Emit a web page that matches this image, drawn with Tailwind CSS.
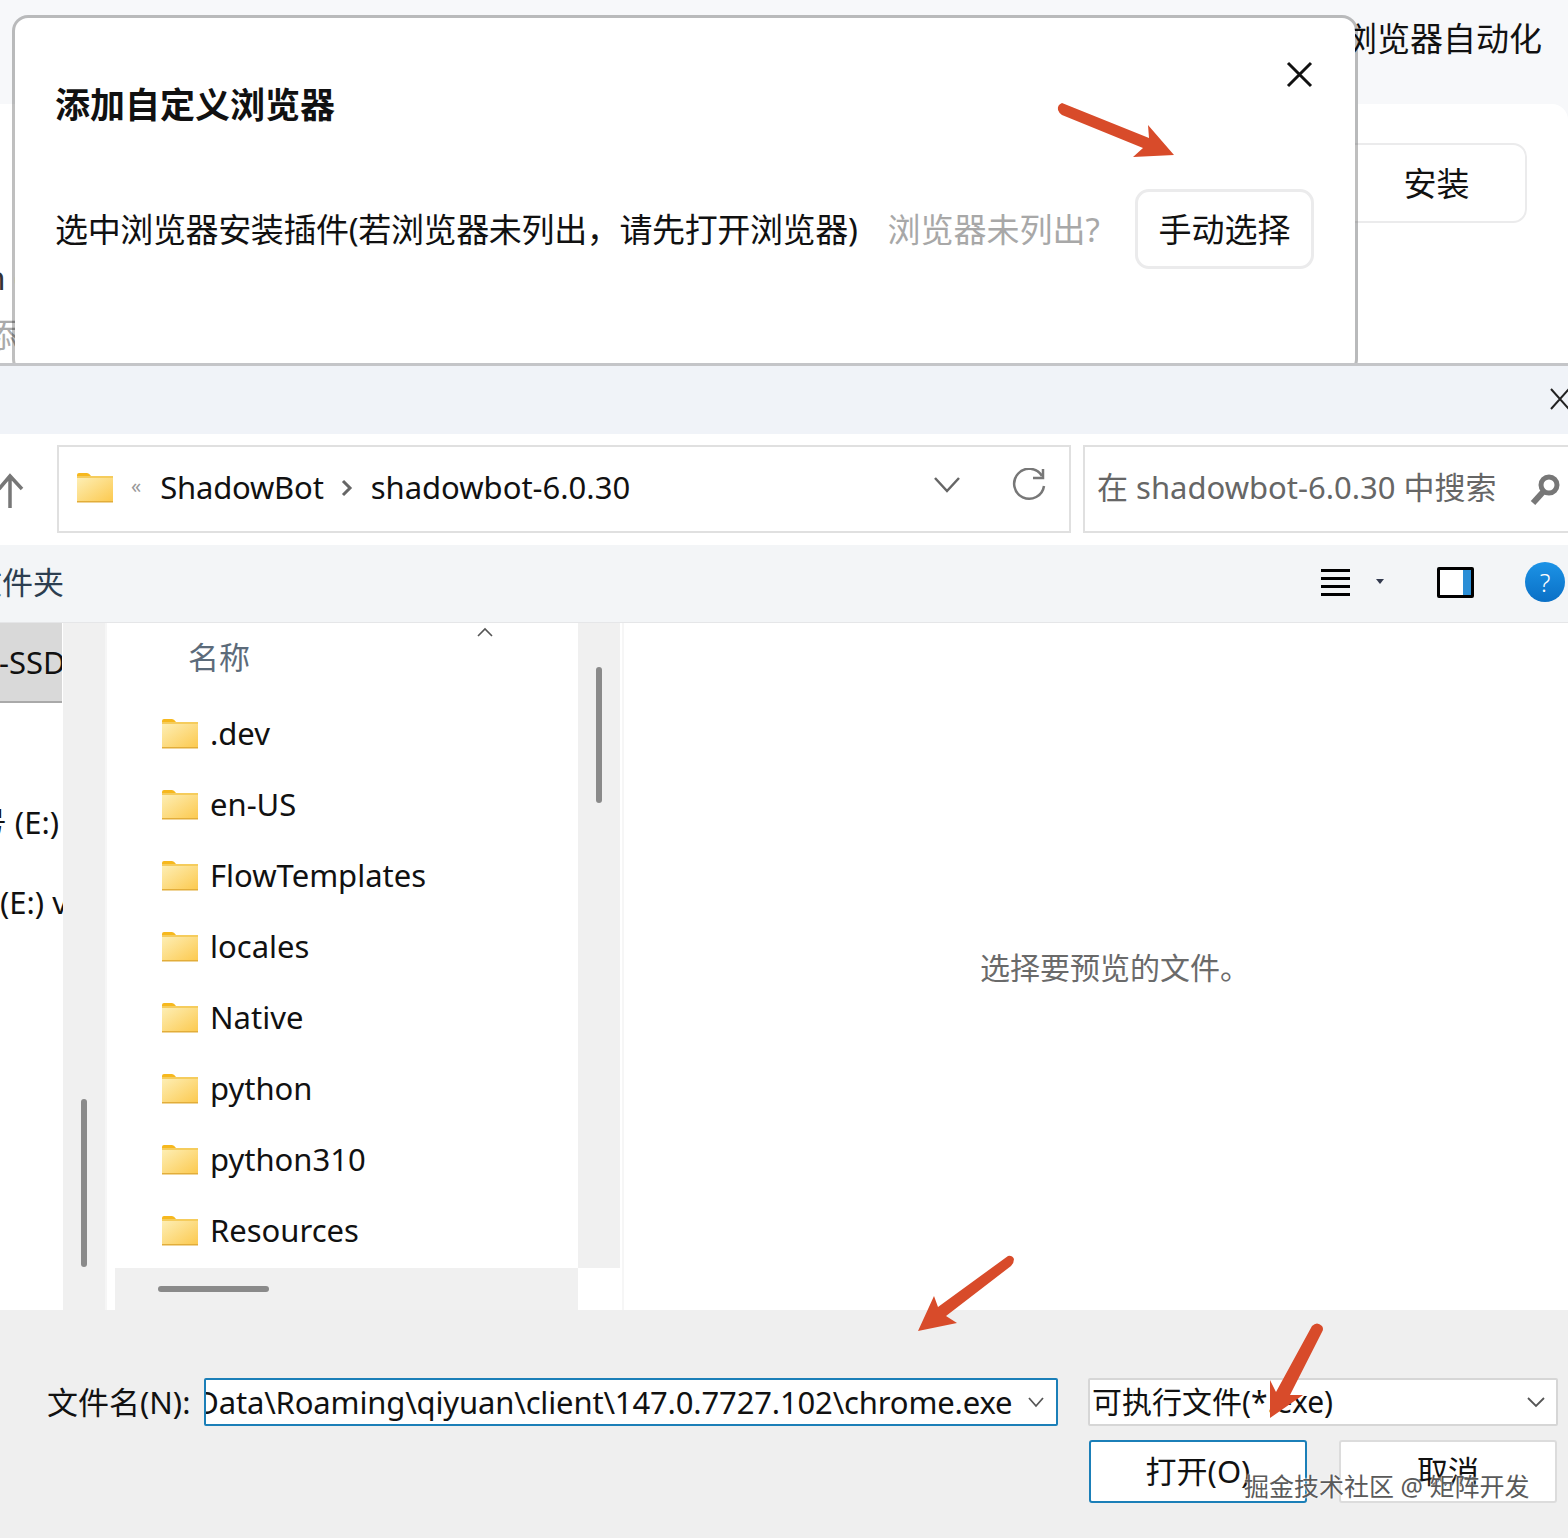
<!DOCTYPE html>
<html lang="zh">
<head>
<meta charset="utf-8">
<script src="https://cdn.jsdelivr.net/npm/@tailwindcss/browser@4"></script>
</head>
<body class="m-0">
<div class="relative w-[1568px] h-[1538px] overflow-hidden bg-white text-[33px] leading-none text-[#111] font-['Noto_Sans','Noto_Sans_CJK_SC',sans-serif]">

  <!-- page behind the modal -->
  <section class="relative h-[366px] bg-[#f7f8fa] border-b-[3px] border-[#c4c5c8] overflow-hidden">
    <div class="absolute left-[1358px] top-[104px] w-[210px] h-[270px] rounded-tr-[16px] bg-white"></div>
    <div class="absolute left-0 top-[104px] w-[20px] h-[270px] bg-white"></div>
    <span class="absolute right-[1544px] top-[261px] text-[#333] whitespace-nowrap">n (</span>
    <span class="absolute left-[-15px] top-[318px] text-[#aaa]">添</span>
    <span class="absolute left-[1344px] top-[22px] whitespace-nowrap">浏览器自动化</span>
    <button class="absolute left-[1330px] top-[143px] w-[197px] h-[80px] rounded-[14px] border-2 border-[#ebebec] bg-white pl-[16px]">安装</button>
    <!-- modal -->
    <div class="absolute left-[12px] top-[15px] w-[1346px] h-[360px] rounded-[16px] border-[3px] border-black/25 bg-white bg-clip-padding">
      <h2 class="absolute left-[40px] top-[69px] text-[35px] font-bold whitespace-nowrap">添加自定义浏览器</h2>
      <svg class="absolute left-[1270px] top-[41px]" width="30" height="30" viewBox="0 0 30 30" fill="none" stroke="#111" stroke-width="3"><path d="M3 4 L26 27 M26 4 L3 27"/></svg>
      <div class="absolute left-[40px] top-[171px] right-[41px] flex items-center h-[80px] whitespace-nowrap">
        <span class="tracking-[-0.36px]">选中浏览器安装插件(若浏览器未列出，请先打开浏览器)</span>
        <span class="ml-[30px] text-[#a8a8a8]">浏览器未列出?</span>
        <button class="ml-auto w-[179px] h-[80px] rounded-[14px] border-[3px] border-[#ebebec] bg-white">手动选择</button>
      </div>
    </div>
  </section>

  <!-- file dialog -->
  <section class="flex flex-col text-[31px] text-[#111]">
    <header class="h-[68px] bg-[#f0f3f8] relative">
      <svg class="absolute left-[1550px] top-[22px]" width="20" height="22" viewBox="0 0 20 22" fill="none" stroke="#222" stroke-width="2"><path d="M1 1 L19 21 M19 1 L1 21"/></svg>
    </header>
    <div class="h-[111px] bg-white flex items-start pt-[11px] relative">
      <svg class="absolute left-[-2px] top-[38px]" width="26" height="38" viewBox="0 0 26 38" fill="none" stroke="#777" stroke-width="3.5"><path d="M12 36 V3 M1 17 L12 4 L24 17"/></svg>
      <div class="ml-[57px] w-[1014px] h-[88px] border-2 border-[#e0e0e0] flex items-center pb-[3px] relative">
        <svg class="ml-[17px]" width="38" height="30" viewBox="0 0 38 30"><use href="#folder"/></svg>
        <span class="ml-[17px] text-[20px] text-[#999] -mt-[3px]">«</span>
        <span class="ml-[19px] tracking-[-0.2px]">ShadowBot</span>
        <svg class="ml-[17px]" width="12" height="20" viewBox="0 0 12 20" fill="none" stroke="#666" stroke-width="3"><path d="M2 3 L9 10 L2 17"/></svg>
        <span class="ml-[18px]">shadowbot-6.0.30</span>
        <svg class="absolute left-[874px] top-[28px]" width="28" height="20" viewBox="0 0 28 20" fill="none" stroke="#666" stroke-width="2.5"><path d="M2 3 L14 16 L26 3"/></svg>
        <svg class="absolute left-[953px] top-[21px]" width="36" height="36" viewBox="0 0 36 36" fill="none" stroke="#777" stroke-width="2.5"><path d="M30 8 A15 15 0 1 0 32 18"/><path d="M31 1 V10 H21"/></svg>
      </div>
      <div class="ml-[12px] flex-1 h-[88px] border-2 border-r-0 border-[#e0e0e0] flex items-center pl-[12px] pb-[3px] text-[#666] relative whitespace-nowrap">
        <span>在 shadowbot-6.0.30 中搜索</span>
        <svg class="absolute left-[444px] top-[25px]" width="32" height="36" viewBox="0 0 32 36" fill="none" stroke="#777"><circle cx="20" cy="13" r="8" stroke-width="5"/><path d="M14 20 L4 31" stroke-width="6"/></svg>
      </div>
    </div>
    <div class="h-[78px] bg-[#f3f5f7] border-b border-[#e5e6e8] flex items-center pb-[3px] relative">
      <span class="absolute left-[-29px] top-[22px] text-[#2c3e50] whitespace-nowrap">文件夹</span>
      <div class="ml-auto flex items-center">
        <div class="flex flex-col gap-[5px]">
          <i class="block w-[29px] h-[3px] bg-black"></i><i class="block w-[29px] h-[3px] bg-black"></i><i class="block w-[29px] h-[3px] bg-black"></i><i class="block w-[29px] h-[3px] bg-black"></i>
        </div>
        <svg class="ml-[25px]" width="10" height="6" viewBox="0 0 10 6"><path d="M1 0 H9 L5 5 Z" fill="#333a4e"/></svg>
        <div class="ml-[52px] w-[37px] h-[31px] border-[3px] border-black rounded-[2px] bg-white flex justify-end"><i class="block w-[8px] bg-[#2b8ed6]"></i></div>
        <div class="ml-[51px] mr-[3px] w-[40px] h-[40px] rounded-full bg-linear-to-b from-[#1c93e6] to-[#0a70c6] text-white text-[25px] font-light flex items-center justify-center">?</div>
      </div>
    </div>

    <div class="h-[687px] flex relative">
      <!-- nav pane -->
      <aside class="w-[63px] relative overflow-hidden whitespace-nowrap">
        <div class="w-[62px] h-[80px] bg-[#d9d9d9] border-b-2 border-[#a9a9a9] overflow-hidden flex items-center"><span class="ml-[-1px]">-SSD</span></div>
        <span class="absolute right-[4px] top-[184px]">号 (E:)</span>
        <span class="absolute left-0 top-[264px]">(E:) v</span>
      </aside>
      <div class="w-[42px] bg-[#f0f0f0] relative">
        <i class="absolute left-[18px] top-[476px] w-[6px] h-[168px] rounded-full bg-[#8a8a8a]"></i>
      </div>
      <!-- list -->
      <div class="w-[473px] pl-[8px] relative border-l-2 border-[#f6f6f6] flex flex-col">
        <div class="h-[75px] relative text-[#5c6b7a]">
          <span class="absolute left-[73px] top-[19px]">名称</span>
          <svg class="absolute left-[361px] top-[3px]" width="18" height="12" viewBox="0 0 18 12" fill="none" stroke="#555" stroke-width="1.6"><path d="M2 10 L9 3 L16 10"/></svg>
        </div>
        <ul class="flex-1">
          <li class="h-[71px] flex items-center pl-[46px] gap-[11px]"><svg width="38" height="30" viewBox="0 0 38 30"><use href="#folder"/></svg><span>.dev</span></li>
          <li class="h-[71px] flex items-center pl-[46px] gap-[11px]"><svg width="38" height="30" viewBox="0 0 38 30"><use href="#folder"/></svg><span>en-US</span></li>
          <li class="h-[71px] flex items-center pl-[46px] gap-[11px]"><svg width="38" height="30" viewBox="0 0 38 30"><use href="#folder"/></svg><span>FlowTemplates</span></li>
          <li class="h-[71px] flex items-center pl-[46px] gap-[11px]"><svg width="38" height="30" viewBox="0 0 38 30"><use href="#folder"/></svg><span>locales</span></li>
          <li class="h-[71px] flex items-center pl-[46px] gap-[11px]"><svg width="38" height="30" viewBox="0 0 38 30"><use href="#folder"/></svg><span>Native</span></li>
          <li class="h-[71px] flex items-center pl-[46px] gap-[11px]"><svg width="38" height="30" viewBox="0 0 38 30"><use href="#folder"/></svg><span>python</span></li>
          <li class="h-[71px] flex items-center pl-[46px] gap-[11px]"><svg width="38" height="30" viewBox="0 0 38 30"><use href="#folder"/></svg><span>python310</span></li>
          <li class="h-[71px] flex items-center pl-[46px] gap-[11px]"><svg width="38" height="30" viewBox="0 0 38 30"><use href="#folder"/></svg><span>Resources</span></li>
        </ul>
        <div class="h-[42px] bg-[#f0f0f0] relative"><i class="absolute left-[43px] top-[18px] w-[111px] h-[6px] rounded-full bg-[#8a8a8a]"></i></div>
      </div>
      <div class="w-[42px] bg-[#f0f0f0] relative h-[645px]">
        <i class="absolute left-[18px] top-[44px] w-[6px] h-[136px] rounded-full bg-[#8a8a8a]"></i>
      </div>
      <!-- preview -->
      <div class="flex-1 border-l-2 border-[#f6f6f6] flex items-center justify-center text-[30px] text-[#6a6a6a] ml-[2px]">
        <span class="mt-[2px] ml-[38px]">选择要预览的文件。</span>
      </div>
    </div>

    <footer class="h-[228px] bg-[#efefef] relative">
      <div class="absolute left-[47px] top-[68px] h-[48px] flex items-center gap-[14px] whitespace-nowrap">
        <span>文件名(N):</span>
        <div class="w-[854px] h-[48px] border-2 border-[#1b7fb8] rounded-[2px] bg-white flex items-center overflow-hidden relative">
          <span class="absolute right-[44px] tracking-[-0.15px]">C:\Users\AppData\Roaming\qiyuan\client\147.0.7727.102\chrome.exe</span>
          <svg class="absolute right-[11px] top-[15px]" width="18" height="14" viewBox="0 0 18 14" fill="none" stroke="#555" stroke-width="1.8"><path d="M2 3 L9 11 L16 3"/></svg>
        </div>
      </div>
      <div class="absolute left-[1088px] top-[68px] w-[470px] h-[48px] border-2 border-[#d6d6d6] rounded-[2px] bg-white flex items-center pl-[2px] text-[30px] whitespace-nowrap">
        可执行文件(*.exe)
        <svg class="absolute right-[10px] top-[15px]" width="20" height="14" viewBox="0 0 20 14" fill="none" stroke="#555" stroke-width="1.8"><path d="M2 3 L10 11 L18 3"/></svg>
      </div>
      <button class="absolute left-[1089px] top-[130px] w-[218px] h-[63px] border-2 border-[#1b7fb8] rounded-[3px] bg-white">打开(O)</button>
      <button class="absolute left-[1339px] top-[130px] w-[218px] h-[63px] border-2 border-[#dcdcdc] rounded-[3px] bg-white">取消</button>
      <span class="absolute left-[1244px] top-[164px] text-[25px] text-[#5a5a5a] whitespace-nowrap [text-shadow:0_0_2px_#fff,0_0_2px_#fff]">掘金技术社区 @ 矩阵开发</span>
    </footer>
  </section>

  <!-- annotation arrows -->
  <svg class="absolute left-0 top-0 pointer-events-none" width="1568" height="1538" viewBox="0 0 1568 1538">
    <g fill="#d84b2a">
      <path d="M1062 103 Q1057 105 1058 110 Q1059 113 1062 115 L1143 148 L1133 157 L1174 155 L1148 125 L1149 138 Z"/>
      <path d="M1008 1256 Q1012 1255 1014 1259 Q1014 1263 1011 1266 L946 1316 L957 1323 L918 1331 L934 1296 L938 1307 Z"/>
      <path d="M1312 1326 Q1317 1321 1322 1326 Q1324 1329 1322 1332 L1290 1395 L1303 1395 L1270 1418 L1270 1380 L1276 1392 Z"/>
    </g>
  </svg>

  <svg width="0" height="0" class="absolute">
    <defs>
      <linearGradient id="fg" x1="0" y1="0" x2="1" y2="1"><stop offset="0" stop-color="#fdeeb4"/><stop offset="1" stop-color="#fcc94e"/></linearGradient>
      <g id="folder">
        <path d="M1 2 Q1 0 3 0 H11 Q13 0 15 3 H1 Z" fill="#f6b81e"/>
        <rect x="1" y="5" width="36" height="24" fill="url(#fg)"/>
        <rect x="1" y="3" width="36" height="2" fill="#f5cc5c"/>
        <rect x="1" y="28" width="36" height="1.5" fill="#e2ad3a"/>
      </g>
    </defs>
  </svg>
</div>
</body>
</html>
